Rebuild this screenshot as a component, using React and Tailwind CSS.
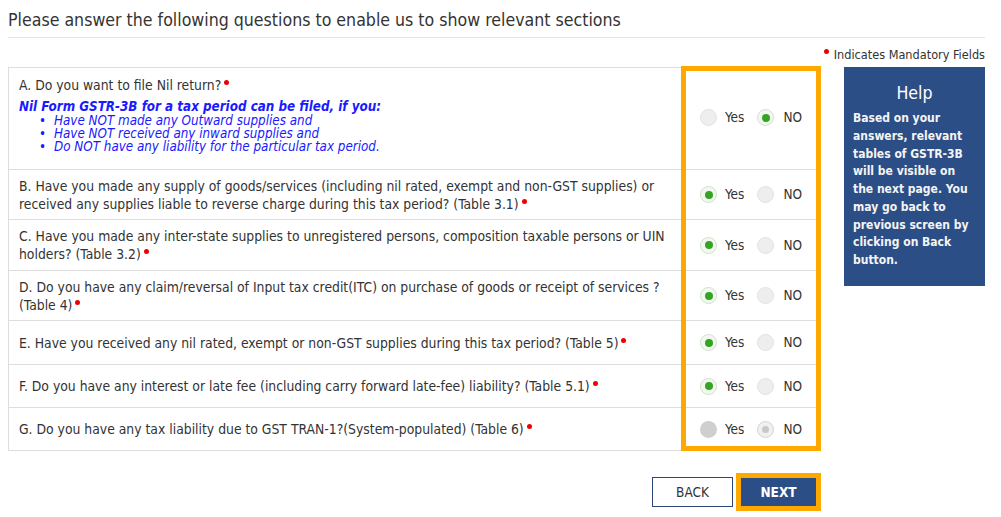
import React from 'react';

const questions = [
  { id: 'B', lines: 'B. Have you made any supply of goods/services (including nil rated, exempt and non-GST supplies) or received any supplies liable to reverse charge during this tax period? (Table 3.1)', answer: 'yes', h: 'h-[50px]' },
  { id: 'C', lines: 'C. Have you made any inter-state supplies to unregistered persons, composition taxable persons or UIN holders? (Table 3.2)', answer: 'yes', h: 'h-[51px]' },
  { id: 'D', lines: 'D. Do you have any claim/reversal of Input tax credit(ITC) on purchase of goods or receipt of services ? (Table 4)', answer: 'yes', h: 'h-[50px]' },
  { id: 'E', lines: 'E. Have you received any nil rated, exempt or non-GST supplies during this tax period? (Table 5)', answer: 'yes', h: 'h-[44px]' },
  { id: 'F', lines: 'F. Do you have any interest or late fee (including carry forward late-fee) liability? (Table 5.1)', answer: 'yes', h: 'h-[43px]' },
  { id: 'G', lines: 'G. Do you have any tax liability due to GST TRAN-1?(System-populated) (Table 6)', answer: 'no', h: 'h-[43px]', disabled: true },
];

const nilPoints = [
  'Have NOT made any Outward supplies and',
  'Have NOT received any inward supplies and',
  'Do NOT have any liability for the particular tax period.',
];

function Dot() {
  return <span className="ml-[3px] inline-block h-[5px] w-[5px] -translate-y-[5px] rounded-full bg-[#e00]" />;
}

function Radio({ checked, disabled }) {
  if (disabled) {
    return checked ? (
      <span className="flex h-[17px] w-[17px] shrink-0 items-center justify-center rounded-full border border-[#d4d4d4] bg-[#f0f0f0]">
        <span className="block h-[7px] w-[7px] rounded-full bg-[#c8c8c8]" />
      </span>
    ) : (
      <span className="block h-[17px] w-[17px] shrink-0 rounded-full bg-[#cfcfcf]" />
    );
  }
  return checked ? (
    <span className="flex h-[17px] w-[17px] shrink-0 items-center justify-center rounded-full border border-[#cfe3c9] bg-[#f3f7f1]">
      <span className="block h-[8px] w-[8px] rounded-full bg-[#33a523]" />
    </span>
  ) : (
    <span className="block h-[17px] w-[17px] shrink-0 rounded-full border border-[#e2e2e2] bg-[#eeeeee]" />
  );
}

function Choice({ answer, disabled }) {
  return (
    <div className="flex items-center pl-[16px] text-[13.5px] text-[#333]">
      <Radio checked={answer === 'yes'} disabled={disabled} />
      <span className="ml-[8px]">Yes</span>
      <span className="ml-[13px] flex"><Radio checked={answer === 'no'} disabled={disabled} /></span>
      <span className="ml-[9px]">NO</span>
    </div>
  );
}

export default function App() {
  return (
    <div className="h-[517px] w-[1001px] overflow-hidden bg-white font-['DejaVu_Sans_Condensed','DejaVu_Sans',sans-serif] text-[#333]">
      <div className="mx-[8px] w-[977px] border-b border-[#e5e5e5] pb-[6px] pt-[9px] text-[17.6px] leading-[22px] text-[#333]">
        Please answer the following questions to enable us to show relevant sections
      </div>
      <div className="mr-[16px] mt-[9px] flex items-center justify-end text-[12.6px] leading-[15px] text-[#333]">
        <span className="mr-[5px] inline-block h-[5px] w-[5px] -translate-y-[3px] rounded-full bg-[#e00]" />
        Indicates Mandatory Fields
      </div>
      <div className="mt-[5px] flex">
        <div className="relative ml-[8px] w-[813px]">
          <div className="border border-[#ddd] border-b-0">
            <div className="flex h-[102px] border-b border-[#ddd]">
              <div className="w-[675px] pl-[10px] pt-[9px] text-[13.8px] leading-[16px]">
                <div>A. Do you want to file Nil return?<Dot /></div>
                <div className="mt-[6px] text-[13.3px] font-bold italic leading-[15px] text-[#1a1aff]">Nil Form GSTR-3B for a tax period can be filed, if you:</div>
                <ul className="pl-[20px] text-[13.3px] italic leading-[13px] text-[#1a1aff]">
                  {nilPoints.map((p) => (
                    <li key={p} className="flex"><span className="w-[15px]">•</span>{p}</li>
                  ))}
                </ul>
              </div>
              <div className="flex flex-1 items-center pb-[2px]">
                <Choice answer="no" />
              </div>
            </div>
            {questions.map((q) => (
              <div key={q.id} className={`flex ${q.h} border-b border-[#ddd]`}>
                <div className="flex w-[675px] items-center pl-[10px] pr-[10px] text-[13.8px] leading-[18px]">
                  <div>{q.lines}<Dot /></div>
                </div>
                <div className="flex flex-1 items-center">
                  <Choice answer={q.answer} disabled={q.disabled} />
                </div>
              </div>
            ))}
          </div>
          <div className="pointer-events-none absolute left-[673px] top-[-1px] h-[385px] w-[140px] border-[5px] border-[#ffa800]" />
          <div className="mt-[22px] flex justify-end gap-[3px]">
            <button className="mt-[4px] h-[30px] w-[81px] border border-[#2c4675] bg-white text-[13.5px] text-[#333]">BACK</button>
            <div className="border-[5px] border-[#ffa800]">
              <button className="h-[28px] w-[75px] bg-[#2c4e86] text-[13.5px] font-bold text-white">NEXT</button>
            </div>
          </div>
        </div>
        <div className="ml-[23px] h-[219px] w-[141px] bg-[#2c4e86] px-[9px] text-white">
          <div className="pt-[15px] text-center text-[17.6px] leading-[22px]">Help</div>
          <div className="mt-[6px] text-[12px] font-bold leading-[17.75px] text-[#f4f4f4]">
            Based on your answers, relevant tables of GSTR-3B will be visible on the next page. You may go back to previous screen by clicking on Back button.
          </div>
        </div>
      </div>
    </div>
  );
}
